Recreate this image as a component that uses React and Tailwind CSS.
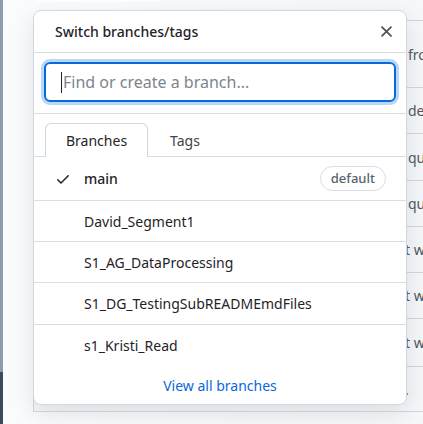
import React from 'react';

const branches = [
  { name: 'main', current: true, isDefault: true, h: 'h-[44px]' },
  { name: 'David_Segment1', h: 'h-[41px]' },
  { name: 'S1_AG_DataProcessing', h: 'h-[41px]' },
  { name: 'S1_DG_TestingSubREADMEmdFiles', h: 'h-[42px]' },
  { name: 's1_Kristi_Read', h: 'h-[41px]', last: true },
];

const bgRows = [
  { text: 'from', h: 'h-[67px]' },
  { text: 'de', h: 'h-[46px]' },
  { text: 'qu', h: 'h-[47px]' },
  { text: 'qu', h: 'h-[46px]' },
  { text: 't w', h: 'h-[46px]', cut: true },
  { text: 't w', h: 'h-[46px]', cut: true },
  { text: 't w', h: 'h-[48px]', cut: true },
  { text: '.', h: 'h-[45px]', cut: true },
];

const CheckIcon = () => (
  <svg width="16" height="16" viewBox="0 0 16 16" fill="#1f2328">
    <path d="M13.78 4.22a.75.75 0 0 1 0 1.06l-7.25 7.25a.75.75 0 0 1-1.06 0L2.22 9.28a.751.751 0 0 1 .018-1.042.751.751 0 0 1 1.042-.018L6 10.94l6.72-6.72a.75.75 0 0 1 1.06 0Z" />
  </svg>
);

const XIcon = () => (
  <svg width="19" height="19" viewBox="0 0 16 16" fill="#4b535c">
    <path d="M3.72 3.72a.75.75 0 0 1 1.06 0L8 6.94l3.22-3.22a.749.749 0 0 1 1.275.326.749.749 0 0 1-.215.734L9.06 8l3.22 3.22a.749.749 0 0 1-.326 1.275.749.749 0 0 1-.734-.215L8 9.06l-3.22 3.22a.751.751 0 0 1-1.042-.018.751.751 0 0 1-.018-1.042L6.94 8 3.72 4.78a.75.75 0 0 1 0-1.06Z" />
  </svg>
);

export default function App() {
  return (
    <div
      className="relative w-[423px] h-[424px] overflow-hidden bg-[#f6f8fa] flex text-[#1f2328]"
      style={{ fontFamily: '"Noto Sans", "Open Sans", sans-serif' }}
    >
      {/* window edge */}
      <div className="w-[3px] flex flex-col shrink-0">
        <div className="h-[372px] bg-[#8e9bae]" />
        <div className="flex-1 bg-[#3e4a5c]" />
      </div>

      {/* page behind the popover */}
      <div className="flex-1 flex flex-col bg-gradient-to-r from-[#fbfcfd] to-[#f6f8fa]">
        <div className="h-[2px] ml-[34px] w-[123px] bg-white rounded-b" />
        <div className="mt-[18px] ml-[30px] border-l border-t border-[#d0d7de] bg-[#f6f8fa]">
          {bgRows.map((r, i) => (
            <div
              key={i}
              className={`${r.h} border-b border-[#d0d7de] flex items-center pl-[374px] overflow-hidden whitespace-nowrap text-[14px] text-[#4b535c]`}
            >
              <span className={r.cut ? '-ml-[3px]' : ''}>{r.text}</span>
            </div>
          ))}
        </div>
      </div>

      {/* branch selector popover */}
      <div className="absolute left-[33px] top-[10px] w-[374px] bg-white border border-[#d0d7de] rounded-lg shadow-[0_8px_24px_rgba(140,149,159,0.25)] flex flex-col">
        <div className="h-[42px] border-b border-[#d8dee4] flex items-center justify-between pl-[21px] pr-[10px]">
          <span className="text-[14px] font-medium">Switch branches/tags</span>
          <XIcon />
        </div>

        <div className="h-[61px] border-b border-[#d8dee4] px-[10px] pt-[9px]">
          <div className="h-[40px] rounded-md border-2 border-[#0969da] ring-[3px] ring-[#b9d7f7] flex items-center pl-[15px]">
            <span className="w-px h-[21px] bg-[#1f2328]" />
            <span className="text-[16px] text-[#7d858d] ml-px">Find or create a branch...</span>
          </div>
        </div>

        <div className="h-[43px] border-b border-[#d8dee4] flex items-end pl-[11px] text-[14px]">
          <div className="h-[34px] -mb-px px-[20px] border border-b-0 border-[#d0d7de] rounded-t-md bg-white flex items-center">
            Branches
          </div>
          <div className="h-[34px] -mb-px px-[22px] flex items-center text-[#3d444d]">Tags</div>
        </div>

        {branches.map((b) => (
          <div
            key={b.name}
            className={`${b.h} ${b.last ? '' : 'border-b border-[#d8dee4]'} flex items-center pl-[21px] pr-[20px] text-[14px]`}
          >
            <div className="w-[16px] flex items-center">{b.current && <CheckIcon />}</div>
            <span className={`ml-[13px] flex-1 ${b.current ? 'font-medium' : ''}`}>{b.name}</span>
            {b.isDefault && (
              <span className="h-[25px] px-[10px] rounded-full border border-[#d8dee4] text-[13px] font-medium text-[#59636e] flex items-center">
                default
              </span>
            )}
          </div>
        ))}

        <div className="h-[38px] flex items-center justify-center text-[14px] text-[#0969da]">
          View all branches
        </div>
      </div>
    </div>
  );
}
